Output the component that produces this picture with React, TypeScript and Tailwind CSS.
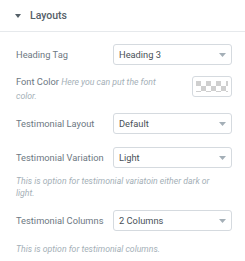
const font = "font-['Roboto','Liberation_Sans',sans-serif]";

function Caret() {
  return (
    <svg width="7" height="4" viewBox="0 0 7 4" className="shrink-0">
      <path d="M0 0h7L3.5 4z" fill="#a4afb7" />
    </svg>
  );
}

function SelectBox({ value }: { value: string }) {
  return (
    <div className="flex h-[21px] w-[119px] shrink-0 items-center justify-between rounded-[3px] border border-[#d5dadf] bg-white pl-[5px] pr-[5px]">
      <span className="text-[9.3px] text-[#495157]">{value}</span>
      <Caret />
    </div>
  );
}

function SelectRow({ label, value, className }: { label: string; value: string; className: string }) {
  return (
    <div className={`flex items-center justify-between ${className}`}>
      <span className="text-[9.3px] text-[#6d7882]">{label}</span>
      <SelectBox value={value} />
    </div>
  );
}

function Note({ children, className }: { children: React.ReactNode; className: string }) {
  return <p className={`w-[205px] text-[8.7px] italic leading-[12px] text-[#a4afb7] ${className}`}>{children}</p>;
}

export default function App() {
  return (
    <div className={`h-[261px] w-[245px] overflow-hidden bg-white ${font}`}>
      {/* header */}
      <div className="flex h-[32px] items-center gap-[9px] border-b border-[#e6e9ec] pl-[15px]">
        <svg width="6" height="4" viewBox="0 0 6 4">
          <path d="M0 0h6L3 4z" fill="#556068" />
        </svg>
        <span className="text-[10.5px] font-medium text-[#556068]">Layouts</span>
      </div>

      <div className="pl-4 pr-[13px]">
        <SelectRow label="Heading Tag" value="Heading 3" className="mt-[12px]" />

        {/* font color */}
        <div className="mt-[10px] flex items-start justify-between">
          <p className="w-[160px] text-[9.3px] leading-[13px] text-[#6d7882]">
            Font Color <span className="text-[8.7px] italic leading-[13px] text-[#a4afb7]">Here you can put the font color.</span>
          </p>
          <div className="mt-[1px] h-[21px] w-[40px] rounded-[3px] border border-[#d5dadf] bg-white px-[3px] py-[4px]">
            <div className="h-full w-full bg-[conic-gradient(#fff_25%,#cfcfcf_0_50%,#fff_0_75%,#cfcfcf_0)] bg-[length:10px_10px]" />
          </div>
        </div>

        <SelectRow label="Testimonial Layout" value="Default" className="mt-[10px]" />
        <SelectRow label="Testimonial Variation" value="Light" className="mt-[13px]" />
        <Note className="mt-[7px]">This is option for testimonial variatoin either dark or light.</Note>
        <SelectRow label="Testimonial Columns" value="2 Columns" className="mt-[11px]" />
        <Note className="mt-[12px]">This is option for testimonial columns.</Note>
      </div>
    </div>
  );
}
